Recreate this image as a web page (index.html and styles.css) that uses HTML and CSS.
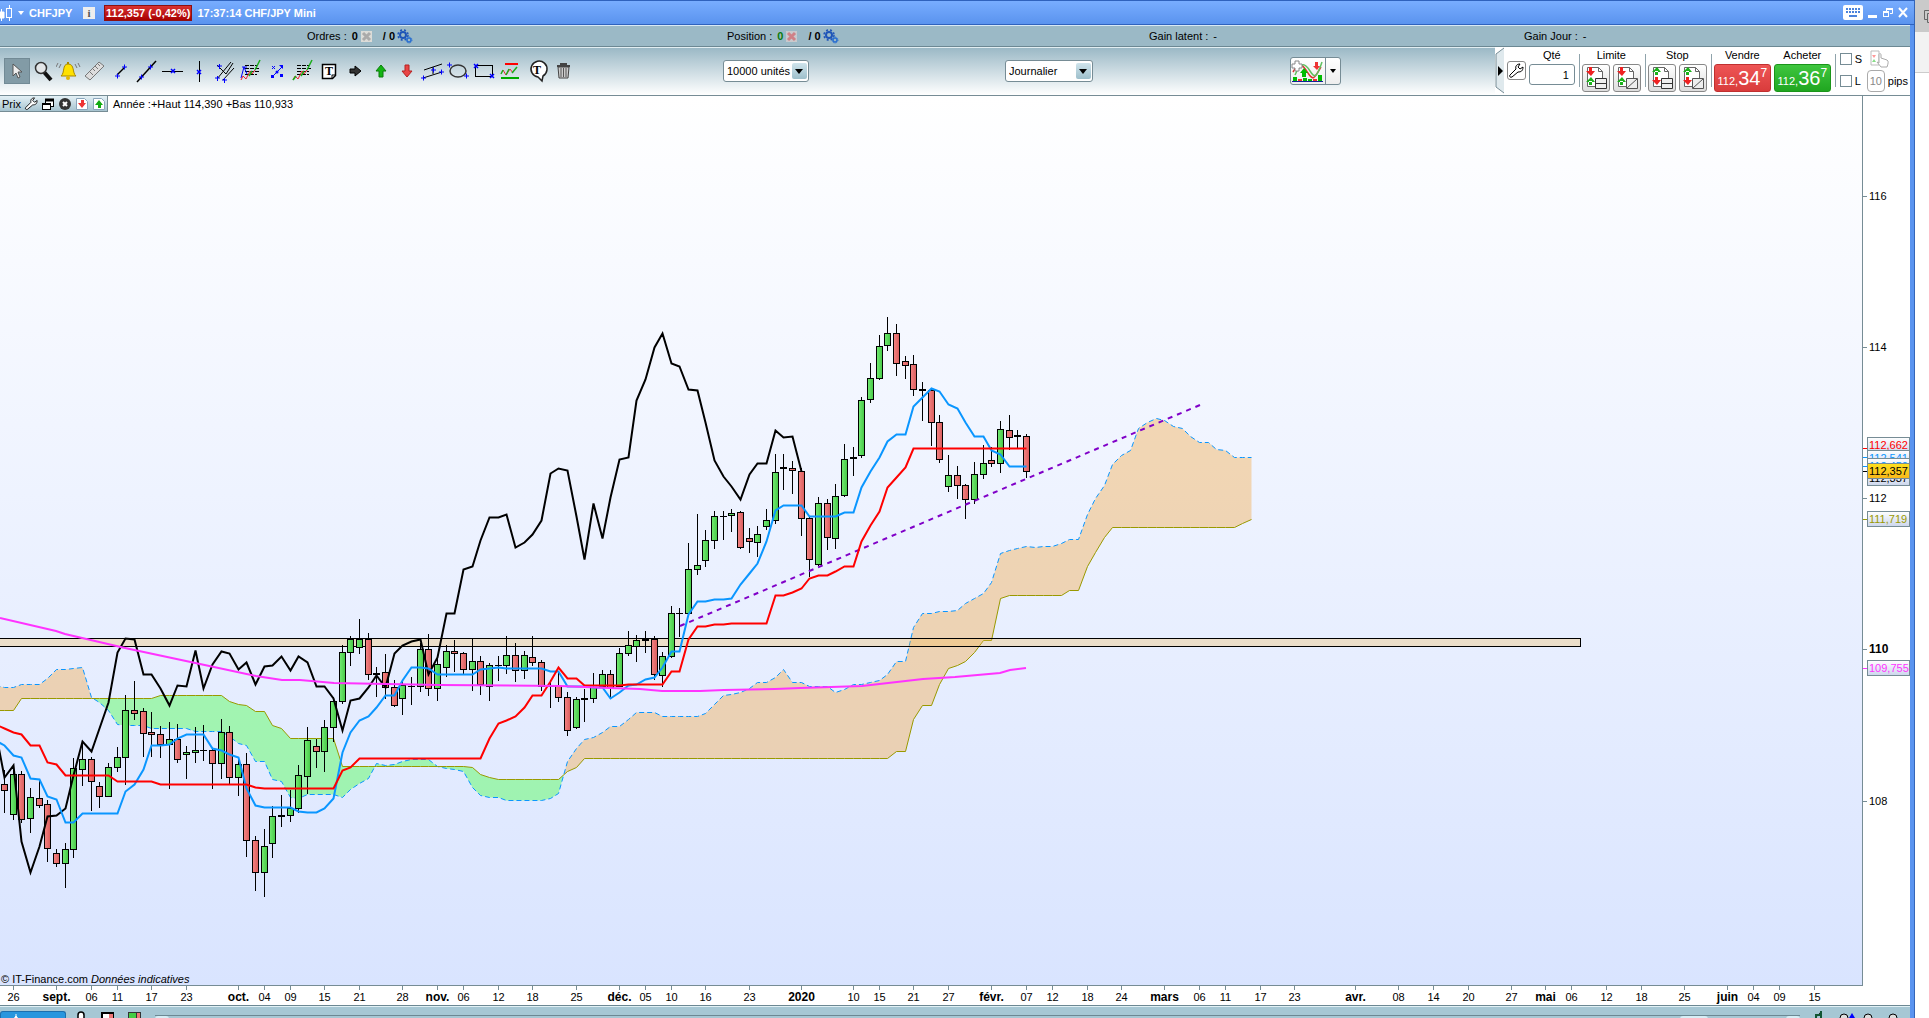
FILE: index.html
```html
<!DOCTYPE html>
<html lang="fr">
<head>
    <meta charset="UTF-8">
    <meta name="viewport" content="width=device-width, initial-scale=1.0">
    <title>CHFJPY - CHF/JPY Mini</title>
    <link rel="stylesheet" href="styles.css">
</head>
<body>
    <div class="window">
        <header class="titlebar">
            <svg class="title-candles" width="13" height="18" viewBox="0 0 13 18"><path d="M1.500 5v12M0 8h4v6H0zM9.500 1v16" stroke="#fff" fill="#fff"/><rect x="6.500" y="4.500" width="5" height="9" fill="#6aa0f8" stroke="#fff"/></svg>
            <span class="caret-white"></span>
            <strong class="symbol">CHFJPY</strong>
            <button class="info" aria-label="Informations">i</button>
            <strong class="change">112,357 (-0,42%)</strong>
            <strong>17:37:14 CHF/JPY Mini</strong>
            <div class="window-buttons">
                <button aria-label="Clavier"><svg width="20" height="15" viewBox="0 0 20 15"><rect width="20" height="15" rx="2" fill="#fff"/><path d="M3 4h14M3 7h14" stroke="#4c83dc" stroke-width="2" stroke-dasharray="2 1"/><path d="M6 11h8" stroke="#4c83dc" stroke-width="2"/></svg></button>
                <button aria-label="Réduire"><svg width="10" height="11" viewBox="0 0 10 11"><path d="M0 9.500h9" stroke="#fff" stroke-width="3"/></svg></button>
                <button aria-label="Restaurer"><svg width="10" height="11" viewBox="0 0 10 11" fill="none" stroke="#fff"><path d="M3.500 4V1.500h6v5H7"/><path d="M3 2h7" stroke-width="2"/><rect x=".5" y="5.500" width="5" height="4"/><path d="M0 5h6" stroke-width="2"/></svg></button>
                <button aria-label="Fermer"><svg width="10" height="11" viewBox="0 0 10 11"><path d="M1 1l8 9M9 1L1 10" stroke="#fff" stroke-width="2"/></svg></button>
            </div>
        </header>

        <div class="account">
            <div class="account-item">
                <span>Ordres :</span> <b>0</b>
                <svg width="13" height="13" viewBox="0 0 13 13"><rect x="1" y="1" width="11" height="11" fill="#dcdcd8"/><path d="M3 3l7 7M10 3l-7 7" stroke="#aaa" stroke-width="3"/></svg>
                <b class="slash">/ 0</b>
                <svg class="gears" width="16" height="15" viewBox="0 0 16 15" fill="none" stroke="#1e55b8"><circle cx="6" cy="6" r="3" stroke-width="2"/><circle cx="6" cy="6" r="5" stroke-width="1.500" stroke-dasharray="2 2"/><circle cx="12" cy="11" r="2" stroke="#2a6fd0" stroke-width="1.500"/><circle cx="12" cy="11" r="3" stroke="#2a6fd0" stroke-dasharray="1 1"/></svg>
            </div>
            <div class="account-item">
                <span>Position :</span> <b class="green">0</b>
                <svg width="13" height="13" viewBox="0 0 13 13"><rect x="1" y="1" width="11" height="11" fill="#c9c9cc"/><path d="M3 3l7 7M10 3l-7 7" stroke="#cf8187" stroke-width="3"/></svg>
                <b class="slash">/ 0</b>
                <svg class="gears" width="16" height="15" viewBox="0 0 16 15" fill="none" stroke="#1e55b8"><circle cx="6" cy="6" r="3" stroke-width="2"/><circle cx="6" cy="6" r="5" stroke-width="1.500" stroke-dasharray="2 2"/><circle cx="12" cy="11" r="2" stroke="#2a6fd0" stroke-width="1.500"/><circle cx="12" cy="11" r="3" stroke="#2a6fd0" stroke-dasharray="1 1"/></svg>
            </div>
            <div class="account-item"><span>Gain latent :</span> <span>-</span></div>
            <div class="account-item"><span>Gain Jour :</span> <span>-</span></div>
        </div>

        <div class="toolbar">
            <div class="tools">
                <button class="tool active" aria-label="Sélection"><svg viewBox="0 0 26 26"><path d="M9 6v12l3-3 2 5 2-1-2-5h4z" fill="#eee" stroke="#555"/></svg></button>
                <button class="tool" aria-label="Zoom"><svg viewBox="0 0 26 26"><path d="M14 14l7 8" stroke="#111" stroke-width="4"/><circle cx="11" cy="10" r="5.500" fill="#e3e6e8" stroke="#333" stroke-width="1.500"/></svg></button>
                <button class="tool" aria-label="Alerte"><svg viewBox="0 0 26 26"><path d="M12 6c-6 0-3 9-7 12h15c-4-3-1-12-8-12z" fill="#ffe100" stroke="#a98800"/><circle cx="12" cy="20" r="2" fill="#e4b900"/><path d="M12 4v2" stroke="#a98800" stroke-width="2"/><path d="M5 6l-2 4M2 5L0 9M19 6l2 4M22 5l2 4" stroke="#777"/></svg></button>
                <button class="tool" aria-label="Règle"><svg viewBox="0 0 26 26"><path d="M3 18L17 4l5 4L8 22z" fill="#ddd" stroke="#777"/><path d="M8 14l3 3M11 11l2 2M13 8l3 3M16 6l2 2" stroke="#777"/></svg></button>
                <button class="tool" aria-label="Segment"><svg viewBox="0 0 26 26"><path d="M9 17l8-8" stroke="#000" stroke-width="1.500"/><path d="M7 18h5M9.500 15.500v5M14 9h5M16.500 6.500v5" stroke="#00f"/></svg></button>
                <button class="tool" aria-label="Droite"><svg viewBox="0 0 26 26"><path d="M3 24L22 3" stroke="#000" stroke-width="1.500"/><path d="M5 19h5M7.500 16.500v5M14 9h5M16.500 6.500v5" stroke="#00f"/></svg></button>
                <button class="tool" aria-label="Horizontale"><svg viewBox="0 0 26 26"><path d="M2 13.500h21" stroke="#000"/><path d="M11 11l4 4M15 11l-4 4" stroke="#00f" stroke-width="1.500"/></svg></button>
                <button class="tool" aria-label="Verticale"><svg viewBox="0 0 26 26"><path d="M13.500 3v21" stroke="#000"/><path d="M11 12l4 4M15 12l-4 4" stroke="#00f" stroke-width="1.500"/></svg></button>
                <button class="tool" aria-label="Fourchette"><svg viewBox="0 0 26 26"><path d="M5 21L19 4M11 22L22 10M5 7l9 9M14 16l7-11" stroke="#000"/><path d="M3 20h5M5.500 18v5M10 22h5M12.500 20v5M5 8h5M7.500 6v5" stroke="#00f"/></svg></button>
                <button class="tool" aria-label="Régression"><svg viewBox="0 0 26 26"><path d="M7 7.500h12M7 10.500h14M7 13.500h14M7 16.500h12" stroke="#000" stroke-dasharray="4 1"/><path d="M3 20l3-11 3 7M4 9h5" fill="none" stroke="#00f"/><path d="M3 22l2-4 3 3 4-8 2 3 3-4" fill="none" stroke="#e23"/><path d="M17 12l5-10M11 18l3-5" stroke="#1bad1b" stroke-width="1.500"/></svg></button>
                <button class="tool" aria-label="Points"><svg viewBox="0 0 26 26"><path d="M9 18l9-9" stroke="#00f"/><path d="M8 8l3 3M11 8l-3 3" stroke="#00f"/><rect x="7" y="17" width="3" height="3" fill="#00f"/><path d="M15 7h4v4z" fill="#00f"/><rect x="16" y="16" width="3" height="3" fill="#00f"/><circle cx="13" cy="14" r="1.500" fill="#00f"/></svg></button>
                <button class="tool" aria-label="Ratios"><svg viewBox="0 0 26 26"><path d="M7 7.500h12M7 10.500h14M7 13.500h12M7 16.500h12" stroke="#000" stroke-dasharray="4 1"/><path d="M3 22l2-4 3 3 4-8 2 3 3-4" fill="none" stroke="#e23"/><path d="M17 12l5-10M3 22l3-4M11 18l3-5" stroke="#1bad1b" stroke-width="1.500"/></svg></button>
                <button class="tool" aria-label="Texte"><svg viewBox="0 0 26 26"><path d="M6.500 6.500h13v11l-3 3h-10z" fill="#fff" stroke="#000" stroke-width="1.500"/><path d="M16 20v-3h3" fill="none" stroke="#000"/><text x="13" y="17" class="glyph">T</text></svg></button>
                <button class="tool" aria-label="Flèche droite"><svg viewBox="0 0 26 26"><path d="M8 11h5V8l6 5-6 5v-3H8z" fill="#333" stroke="#000"/></svg></button>
                <button class="tool" aria-label="Flèche haut"><svg viewBox="0 0 26 26"><path d="M11 19v-6H8l5-6 5 6h-3v6z" fill="#13b513" stroke="#0a7d0a"/></svg></button>
                <button class="tool" aria-label="Flèche bas"><svg viewBox="0 0 26 26"><path d="M11 7v6H8l5 6 5-6h-3V7z" fill="#e84545" stroke="#b52222"/></svg></button>
                <button class="tool" aria-label="Canal"><svg viewBox="0 0 26 26"><path d="M4 12l18-6M3 20l19-6M13 9v7" stroke="#000"/><path d="M1 20h5M3.500 17.500v5M19 14h5M21.500 11.500v5M11 12h5M13.500 9.500v5" stroke="#00f"/></svg></button>
                <button class="tool" aria-label="Ellipse"><svg viewBox="0 0 26 26"><ellipse cx="12" cy="13" rx="8" ry="6" fill="none" stroke="#333" stroke-width="1.500"/><path d="M1 7h5M3.500 4.500v5M18 18h5M20.500 15.500v5" stroke="#00f"/></svg></button>
                <button class="tool" aria-label="Rectangle"><svg viewBox="0 0 26 26"><rect x="3.500" y="7.500" width="17" height="11" fill="none" stroke="#000"/><path d="M2 6l4 4M6 6l-4 4M18 16l4 4M22 16l-4 4" stroke="#00f" stroke-width="1.500"/></svg></button>
                <button class="tool" aria-label="Bornes"><svg viewBox="0 0 26 26"><path d="M7 6h13" stroke="#f00" stroke-width="2"/><path d="M3 20h18" stroke="#0a0" stroke-width="2"/><path d="M5 12l3 5 4-6 3 4" fill="none" stroke="#e23"/><path d="M3 16l2-4M8 17l3-6M14 15l5-6" fill="none" stroke="#1bad1b" stroke-width="1.500"/></svg></button>
                <button class="tool" aria-label="Commentaire"><svg viewBox="0 0 26 26"><path d="M18 23l-4-4a8 8 0 1 1 5-1z" fill="#fff" stroke="#222" stroke-width="1.500"/><text x="13" y="16" class="glyph">T</text></svg></button>
                <button class="tool" aria-label="Supprimer"><svg viewBox="0 0 26 26"><path d="M8 9h11l-1 11H9z" fill="#ccc" stroke="#444"/><path d="M11 10v9M13.500 10v9M16 10v9" stroke="#555"/><path d="M7 8h13M10 6h7" stroke="#444" stroke-width="2"/></svg></button>
            </div>

            <div class="dropdown units">
                <select aria-label="Unités"><option>10000 unités</option></select>
            </div>
            <div class="dropdown period">
                <select aria-label="Période"><option>Journalier</option></select>
            </div>

            <div class="indicators">
                <button class="indicator-main" aria-label="Indicateurs"><svg width="33" height="24" viewBox="0 0 33 24"><path d="M2 13C9 1 12 6 17 14s6 6 13-6" fill="none" stroke="#d33" stroke-width="1.500"/><path d="M4 16C10 2 14 4 19 12s7 6 12-9" fill="none" stroke="#5fc05f" stroke-width="1.500"/><path d="M4 2h4v3h3v4H8v3H4V9H1V5h3z" fill="#fff" stroke="#888"/><path d="M24 3h3v4h2l-3 4-4-4h2z" fill="#e33"/><path d="M11 18v-4H9l4-5 4 5h-2v4z" fill="#0b0"/><path d="M2 22v-4h4v4M12 22v-3h4v3M17 22v-2h4v2M27 22v-6h4v6" fill="#0b0"/><path d="M7 22v-2h4v2M22 22v-2h4v2" fill="#e33"/><path d="M1 22.500h31" stroke="#129"/></svg></button>
                <button class="indicator-more" aria-label="Plus d'indicateurs"></button>
            </div>

            <form class="order-panel">
                <button type="button" class="collapse" aria-label="Replier"><svg width="10" height="47" viewBox="0 0 10 47"><path d="M9 1L1 7v33l8 6" fill="#dfe9ed" stroke="#768c95"/><path d="M3 19l5 5-5 5z"/></svg></button>
                <button type="button" class="small-button wrench" aria-label="Réglages"><svg width="16" height="16" viewBox="0 0 16 16"><path d="M2 12l6-6c-1-3 1-5 4-5l-2 3 2 2 3-2c0 4-2 5-5 5l-6 5c-2 1-3-1-2-2z" fill="#fff" stroke="#000"/></svg></button>
                <div class="field">
                    <label for="qty">Qté</label>
                    <input id="qty" class="qty" type="text" value="1">
                </div>
                <div class="field divided">
                    <span>Limite</span>
                    <div class="pair">
                        <button type="button" class="order-button" aria-label="Limite simple"><svg viewBox="0 0 28 28"><use href="#doc"/><path d="M4 7h9l-4 5zM7 3h3v5H7z" fill="#e22"/><path d="M4 18h9l-4-5zM7 17h3v4H7z" fill="#1ab21a"/><path d="M13.500 14.500h11v10h-11zM13 19.500h12" fill="#eee" stroke="#333"/></svg></button>
                        <button type="button" class="order-button" aria-label="Limite attachée"><svg viewBox="0 0 28 28"><use href="#doc"/><path d="M4 7h9l-4 5zM7 3h3v5H7z" fill="#e22"/><path d="M4 18h9l-4-5zM7 17h3v4H7z" fill="#1ab21a"/><path d="M13.500 14.500h11v10h-11zM14 24l10-9" fill="#eee" stroke="#555"/></svg></button>
                    </div>
                </div>
                <div class="field divided">
                    <span>Stop</span>
                    <div class="pair">
                        <button type="button" class="order-button" aria-label="Stop simple"><svg viewBox="0 0 28 28"><use href="#doc"/><path d="M4 8h9L9 3zM7 7h3v4H7z" fill="#1ab21a"/><path d="M4 16h9l-4 5zM7 13h3v4H7z" fill="#e22"/><path d="M13.500 14.500h11v10h-11zM13 19.500h12" fill="#eee" stroke="#333"/></svg></button>
                        <button type="button" class="order-button" aria-label="Stop attaché"><svg viewBox="0 0 28 28"><use href="#doc"/><path d="M4 8h9L9 3zM7 7h3v4H7z" fill="#1ab21a"/><path d="M4 16h9l-4 5zM7 13h3v4H7z" fill="#e22"/><path d="M13.500 14.500h11v10h-11zM14 24l10-9" fill="#eee" stroke="#555"/></svg></button>
                    </div>
                </div>
                <div class="field divided">
                    <label for="sell">Vendre</label>
                    <button type="button" id="sell" class="price sell">112,<span class="big">34</span><sup>7</sup></button>
                </div>
                <div class="field buy-field">
                    <label for="buy">Acheter</label>
                    <button type="button" id="buy" class="price buy">112,<span class="big">36</span><sup>7</sup></button>
                </div>
                <div class="options divided">
                    <label class="check"><input type="checkbox"> S</label>
                    <svg class="hand" width="20" height="18" viewBox="0 0 20 18"><path d="M1 1h8v14H1z" fill="#fff" stroke="#bbb"/><path d="M2 5l2 3 2-3z" fill="#f99"/><path d="M2 12l2-3 2 3z" fill="#8d8"/><path d="M9 13V5c0-2 2-2 2 0v3l6 2c2 1 1 4 0 7h-6l-4-5z" fill="#fff" stroke="#aaa"/></svg>
                    <label class="check"><input type="checkbox"> L</label>
                    <label class="pips"><input type="text" value="10"> pips</label>
                </div>
            </form>
        </div>

        <main class="chart">
            <div class="plot">
                <svg id="plot"></svg>
                <div class="legend">
                    <div class="legend-box">
                        <span>Prix</span>
                        <button aria-label="Réglages"><svg width="14" height="14" viewBox="0 0 16 16"><path d="M2 12l6-6c-1-3 1-5 4-5l-2 3 2 2 3-2c0 4-2 5-5 5l-6 5c-2 1-3-1-2-2z" fill="#fff" stroke="#000"/></svg></button>
                        <button aria-label="Fenêtres"><svg width="14" height="14" viewBox="0 0 14 14" fill="#fff" stroke="#000"><rect x="4.500" y="2.500" width="8" height="7"/><path d="M4 3h9" stroke-width="3"/><rect x="1.500" y="6.500" width="8" height="6"/><path d="M1 7h9" stroke-width="2"/></svg></button>
                        <button aria-label="Fermer"><svg width="14" height="14" viewBox="0 0 14 14"><circle cx="7" cy="7" r="6" fill="#333"/><path d="M5 5l4 4M9 5L5 9" stroke="#fff" stroke-width="2"/></svg></button>
                        <button aria-label="Descendre"><svg width="14" height="14" viewBox="0 0 14 14"><path d="M1.500 1.500h8l3 3v8h-11z" fill="#fff" stroke="#8aa5bb"/><path d="M6 3h3v3h2l-4 5-4-5h3z" fill="#e33"/></svg></button>
                        <button aria-label="Monter"><svg width="14" height="14" viewBox="0 0 14 14"><path d="M1.500 1.500h8l3 3v8h-11z" fill="#fff" stroke="#8aa5bb"/><path d="M6 11h3V8h2L7 3 3 8h3z" fill="#1a1"/></svg></button>
                    </div>
                    <span>Année :+Haut 114,390 +Bas 110,933</span>
                </div>
                <div class="copyright">© IT-Finance.com <em>Données indicatives</em></div>
            </div>
            <svg id="priceAxis"></svg>
            <svg id="timeAxis"></svg>
        </main>

        <footer class="bottombar">
            <button class="bottom-tab" aria-label="Graphique"><svg width="9" height="8" viewBox="0 0 9 8"><path d="M5 2v6M2 8l3-4 3 4" stroke="#fff" fill="#fff"/></svg></button>
            <svg width="12" height="7" viewBox="0 0 12 7"><path d="M3 7V4a3 3 0 0 1 6 0v3" fill="#fff" stroke="#000" stroke-width="1.500"/></svg>
            <svg width="13" height="6" viewBox="0 0 13 6"><rect x="1" y="1" width="11" height="9" fill="#fff" stroke="#000" stroke-width="2"/><path d="M8 2h4v5H8z" fill="#e77"/></svg>
            <svg width="13" height="6" viewBox="0 0 13 6"><rect width="13" height="9" fill="#333"/><path d="M1 1h7v7H1z" fill="#4c4"/><path d="M9 1h3v7H9z" fill="#e77"/></svg>
            <div class="scroll-track"><span class="scroll-start"></span><span class="scroll-thumb"></span><span class="scroll-end"></span></div>
            <svg width="84" height="8" viewBox="0 0 84 8"><path d="M2 8V5h5V1M7 4v4" stroke="#153" stroke-width="2"/><circle cx="30" cy="8" r="4" fill="#ddd" stroke="#000"/><path d="M35 8l3-5 3 5z" fill="#00f"/><circle cx="54" cy="8" r="4" fill="#ddd" stroke="#000"/><circle cx="79" cy="8" r="4" fill="#ddd" stroke="#000"/></svg>
        </footer>
    </div>

    <aside class="behind">
        <div class="behind-tab"><svg width="10" height="16" viewBox="0 0 10 16" fill="none" stroke="#666"><path d="M10 1.500H1.500v9H4M10 4.500H4.500v9H10"/></svg></div>
        <div class="behind-bar"></div>
    </aside>

    <svg class="defs" width="0" height="0"><defs>
        <g id="doc"><path d="M5.500 3.500h11l4 4v15h-15z" fill="#fff" stroke="#666"/><path d="M16.500 3.500v4h4" fill="none" stroke="#666"/></g>
        <linearGradient id="up"><stop offset="0" stop-color="#74ec74"/><stop offset="1" stop-color="#46c846"/></linearGradient>
        <linearGradient id="down"><stop offset="0" stop-color="#f58585"/><stop offset="1" stop-color="#d95c5c"/></linearGradient>
    </defs></svg>

    <script src="chart.js"></script>
</body>
</html>
```
FILE: styles.css
```css
* {
    box-sizing: border-box;
}

body {
    margin: 0;
    height: 100vh;
    display: flex;
    overflow: hidden;
    font-family: "Liberation Sans", Arial, sans-serif;
    font-size: 11px;
    color: #000;
    background: #fff;
}

button, input, select {
    font: inherit;
    margin: 0;
    padding: 0;
}

button {
    border: none;
    background: none;
}

svg {
    display: block;
    flex-shrink: 0;
}

.defs {
    position: absolute;
}

.window {
    flex: 1;
    min-width: 0;
    display: flex;
    flex-direction: column;
    border-right: 4px solid #5a94f0;
    box-shadow: 1px 0 0 #3465b8;
    z-index: 1;
}

/* Title bar */
.titlebar {
    height: 25px;
    margin-right: -4px;
    padding-right: 6px;
    display: flex;
    align-items: center;
    color: #fff;
    background: linear-gradient(#78adff, #5a93ee);
    border-top: 1px solid #2f62bd;
    border-bottom: 1px solid #2f62bd;
}

.caret-white {
    margin: 0 5px;
    border: 3px solid transparent;
    border-top: 4px solid #fff;
    border-bottom: none;
}

.symbol {
    width: 54px;
}

.info {
    width: 12px;
    height: 12px;
    margin-right: 9px;
    line-height: 12px;
    font-family: "Liberation Serif", serif;
    font-weight: bold;
    color: #555;
    background: #eee;
}

.change {
    height: 16px;
    margin-right: 5px;
    padding: 0 1px;
    line-height: 14px;
    background: linear-gradient(#d93232, #a80000);
    border: 1px solid #8c1010;
}

.window-buttons {
    margin-left: auto;
    display: flex;
    align-items: center;
    gap: 5px;
}

/* Orders / position */
.account {
    height: 22px;
    padding-left: 307px;
    display: grid;
    grid-template-columns: 420fr 422fr 375fr 386fr;
    align-items: center;
    background: #9bb9c6;
    border-top: 1px solid #d9e9f5;
    border-bottom: 1px solid #6c8893;
}

.account-item {
    display: flex;
    align-items: center;
    gap: 5px;
}

.account-item svg {
    margin-left: -3px;
}

.slash {
    margin-left: 5px;
}

.green {
    color: #0a7a0a;
}

/* Toolbar */
.toolbar {
    height: 49px;
    padding: 0 0 2px 4px;
    display: flex;
    align-items: center;
    background: linear-gradient(#9bb9c6, #fff);
    border-top: 1px solid #e2eef2;
    border-bottom: 1px solid #768c95;
}

.tools {
    display: flex;
}

.tool {
    width: 26px;
    height: 26px;
}

.tool svg {
    width: 26px;
    height: 26px;
}

.tool.active {
    background: #829ba6;
    border: 1px solid #728a95;
}

.tool.active svg {
    margin: -1px;
}

.glyph {
    font-family: "Liberation Serif", serif;
    font-size: 12px;
    font-weight: bold;
    text-anchor: middle;
}

.dropdown {
    position: relative;
    height: 22px;
}

.dropdown select {
    width: 100%;
    height: 22px;
    padding-left: 3px;
    appearance: none;
    color: #000;
    background: #fff;
    border: 1px solid #768c95;
    border-radius: 3px;
}

.dropdown::before {
    content: "";
    position: absolute;
    top: 3px;
    right: 2px;
    width: 15px;
    height: 16px;
    background: linear-gradient(#cfe4ec, #9dbfcb);
    border-radius: 2px;
    pointer-events: none;
}

.dropdown::after {
    content: "";
    position: absolute;
    top: 9px;
    right: 6px;
    border: 4px solid transparent;
    border-top: 5px solid #000;
    border-bottom: none;
    pointer-events: none;
}

.units {
    width: 86px;
    margin-left: 147px;
}

.period {
    width: 88px;
    margin-left: 196px;
}

.indicators {
    height: 28px;
    margin-left: 197px;
    display: flex;
    background: linear-gradient(#fff, #eee);
    border: 1px solid #768c95;
    border-radius: 3px;
}

.indicator-main {
    width: 35px;
    border-right: 1px solid #768c95;
}

.indicator-more {
    width: 14px;
    display: flex;
    align-items: center;
    justify-content: center;
}

.indicator-more::after {
    content: "";
    border: 3px solid transparent;
    border-top: 4px solid #000;
    border-bottom: none;
}

/* Order panel */
.order-panel {
    height: 47px;
    margin-left: auto;
    padding-right: 2px;
    display: flex;
    align-items: center;
    background: #fff;
}

.small-button {
    width: 19px;
    height: 19px;
    margin: 0 3px 0 2px;
    border: 1px solid #888;
    border-radius: 3px;
}

.field {
    height: 43px;
    display: flex;
    flex-direction: column;
    align-items: center;
}

.field > span, .field > label {
    height: 15px;
    line-height: 13px;
}

.divided {
    padding-left: 3px;
    margin-left: 4px;
    position: relative;
}

.divided::before {
    content: "";
    position: absolute;
    left: 0;
    top: 5px;
    bottom: 5px;
    border-left: 1px solid #8fa3ab;
}

.qty {
    width: 46px;
    height: 21px;
    padding-right: 5px;
    text-align: right;
    border: 1px solid #768c95;
    border-radius: 3px;
}

.pair {
    display: flex;
    gap: 3px;
}

.order-button {
    width: 28px;
    height: 28px;
    background: linear-gradient(#fff, #ddd);
    border: 1px solid #888;
    border-radius: 3px;
}

.order-button svg {
    width: 28px;
    height: 28px;
    margin: -1px;
}

.price {
    width: 57px;
    height: 28px;
    color: #fff;
    line-height: 26px;
    white-space: nowrap;
    border-radius: 3px;
}

.price .big {
    font-size: 20px;
}

.price sup {
    font-size: 12px;
    line-height: 0;
    vertical-align: 8px;
}

.sell {
    background: linear-gradient(#ee5555, #d93c3c);
    border: 1px solid #c03030;
}

.buy {
    background: linear-gradient(#3fc63f, #20a620);
    border: 1px solid #1a951a;
}

.buy-field {
    margin-left: 3px;
}

.options {
    height: 43px;
    padding-left: 5px;
    display: grid;
    grid-template-columns: 27px auto;
    grid-template-rows: 20px 24px;
    align-items: center;
}

.check, .pips {
    display: flex;
    align-items: center;
    gap: 3px;
}

.check input {
    width: 12px;
    height: 12px;
    appearance: none;
    background: #fff;
    border: 1px solid #768c95;
}

.pips input {
    width: 18px;
    height: 22px;
    text-align: center;
    color: #888;
    border: 1px solid #aaa;
    border-radius: 4px;
}

.hand {
    margin-left: 3px;
}

/* Chart */
.chart {
    flex: 1;
    min-height: 0;
    display: grid;
    grid-template-columns: 1fr 47px;
    grid-template-rows: 1fr 19px;
}

.plot {
    position: relative;
    min-width: 0;
    background: linear-gradient(#fff, #d9e4ff);
    border-right: 1px solid #768c95;
    border-bottom: 1px solid #768c95;
}

#plot {
    width: 100%;
    height: 100%;
}

#priceAxis {
    width: 47px;
    height: 100%;
}

#timeAxis {
    width: 100%;
    height: 19px;
}

.legend {
    position: absolute;
    top: 0;
    left: 0;
    display: flex;
    align-items: center;
    gap: 5px;
}

.legend-box {
    width: 108px;
    height: 16px;
    padding-left: 2px;
    display: flex;
    align-items: center;
    gap: 3px;
    background: linear-gradient(#e4f1f6, #a6c3cf);
    border-right: 1px solid #768c95;
    border-bottom: 1px solid #768c95;
}

.copyright {
    position: absolute;
    left: 1px;
    bottom: 0;
    line-height: 11px;
}

.day {
    font-size: 11px;
    text-anchor: middle;
}

.month {
    font-size: 12px;
    font-weight: bold;
    text-anchor: middle;
}

.level {
    font-size: 11px;
}

.level.strong {
    font-size: 12px;
    font-weight: bold;
}

/* Bottom bar */
.bottombar {
    height: 13px;
    padding-right: 12px;
    display: flex;
    align-items: flex-end;
    gap: 14px;
    overflow: hidden;
    background: #a6c7d4;
    border-top: 1px solid #6c8893;
    box-shadow: inset 0 1px 0 #e2f2f6;
}

.bottom-tab {
    width: 66px;
    height: 7px;
    margin-right: -5px;
    padding-left: 10px;
    background: #2896de;
    border: 1px solid #1c6fae;
    border-bottom: none;
    border-radius: 3px 3px 0 0;
}

.scroll-track {
    flex: 1;
    height: 3px;
    display: flex;
    gap: 78px;
    border-top: 1px solid #6c8893;
}

.scroll-start, .scroll-thumb, .scroll-end {
    width: 14px;
    height: 3px;
    background: #d7eef6;
    border-radius: 3px 3px 0 0;
}

.scroll-start {
    margin-right: auto;
}

.scroll-thumb {
    width: 28px;
}

/* Window behind */
.behind {
    width: 15px;
    padding-left: 1px;
    background: #fff;
}

.behind-tab {
    height: 32px;
    padding: 9px 0 0 8px;
    background: #cacaca;
    overflow: hidden;
}

.behind-bar {
    height: 41px;
    background: #f2f2f2;
    border-bottom: 1px solid #ccc;
}
```
FILE: chart.js
```js
const TOP = 96;
const STEP = 8.66;

// [color, high, body top, body bottom, low]  g = up, r = down, d = doji
const candles = [
    ['r',770,784,790,813],['g',768,774,814,820],['r',771,774,819,823],['g',788,797,818,833],['r',779,798,805,808],
    ['r',800,804,848,862],['r',849,853,863,867],['g',843,849,863,888],['g',758,768,849,858],['g',741,759,769,786],
    ['r',757,759,781,811],['r',782,786,796,808],['g',763,767,796,797],['g',747,757,767,772],['g',695,710,757,785],
    ['r',681,710,713,720],['r',708,711,733,757],['r',712,732,734,757],['r',726,734,744,758],['g',722,739,744,789],
    ['r',724,739,759,763],['g',746,752,754,779],['g',727,750,752,763],['d',725,750,750,761],['r',749,750,763,789],
    ['g',719,732,763,779],['r',726,732,777,785],['g',757,764,777,796],['r',753,764,840,857],['r',836,840,872,891],
    ['g',829,846,872,897],['g',806,816,843,858],['d',795,815,816,827],['g',790,808,815,822],['g',765,775,808,813],
    ['g',727,740,776,794],['r',739,746,751,768],['g',720,727,751,772],['g',697,701,727,742],['g',645,652,701,704],
    ['g',636,639,652,666],['g',619,639,647,654],['r',633,639,674,680],['d',667,673,674,697],['r',654,672,687,699],
    ['r',680,687,705,707],['g',680,685,698,715],['d',677,686,686,705],['g',643,649,686,692],['r',634,649,688,696],
    ['g',658,664,688,701],['g',645,651,667,677],['r',640,651,653,672],['r',652,653,669,674],['g',639,661,669,691],
    ['r',656,661,684,695],['g',663,665,686,701],['d',656,665,665,681],['g',636,655,665,674],['r',643,655,670,682],
    ['g',651,655,670,679],['r',636,657,662,666],['r',660,662,686,691],['d',680,686,686,708],['r',672,686,697,702],
    ['r',692,697,730,736],['g',697,699,727,729],['d',689,698,699,722],['g',673,687,698,703],['g',670,674,686,688],
    ['r',670,674,687,698],['g',648,653,686,687],['g',631,645,653,656],['g',635,640,646,662],['d',631,639,640,653],
    ['r',636,639,674,680],['g',652,656,675,687],['g',606,613,656,658],['d',608,613,613,637],['g',543,569,613,614],
    ['g',514,565,569,575],['g',530,540,560,567],['g',511,516,540,549],['d',511,516,516,540],['g',509,513,515,532],
    ['r',511,512,547,549],['r',528,538,541,553],['g',526,534,542,557],['g',509,520,526,530],['g',454,472,520,524],
    ['d',454,467,468,490],['r',461,468,470,494],['r',468,471,518,536],['r',517,518,559,577],['g',497,503,564,566],
    ['r',499,503,537,550],['g',484,496,538,549],['g',444,459,495,497],['d',447,457,458,476],['g',397,400,455,458],
    ['g',363,378,399,403],['g',335,346,378,380],['g',317,333,345,351],['r',324,333,363,376],['r',356,361,365,379],
    ['r',355,364,389,396],['d',382,389,390,421],['r',388,390,422,446],['r',415,422,459,463],['g',455,475,486,492],
    ['r',466,475,485,499],['r',484,485,499,519],['g',462,474,499,504],['g',445,463,474,479],['r',447,460,463,467],
    ['g',421,429,463,473],['r',415,430,437,450],['d',430,435,436,448],['r',434,436,471,478]
];

// Every series starts one bar before the first visible candle
const chikou = [
    730,777,765,841,872,846,816,815,808,775,741,751,728,702,652,638,639,674,674,688,705,685,686,650,688,664,
    651,653,669,662,684,666,665,656,670,656,662,686,686,698,730,700,698,687,675,687,653,645,641,639,674,657,
    613,613,569,566,540,517,517,514,547,542,534,520,473,468,470,516,559,503,538,497,459,457,400,379,347,333,
    363,366,389,390,422,460,476,486,499,474,463,463,430,437,436,471
];

const tenkan = [
    740,745,755,757,778,779,796,799,822,822,813,813,813,813,813,791,784,769,745,745,744,738,734,734,734,748,
    750,754,757,788,805,807,807,807,807,811,812,812,808,798,752,732,720,716,707,695,695,680,667,667,668,674,
    674,674,674,674,669,668,667,668,668,668,668,668,671,671,686,686,686,687,687,698,692,685,684,679,677,667,
    651,651,614,601,601,599,599,598,584,573,563,541,510,505,505,505,516,516,516,516,512,512,487,471,457,441,
    434,434,406,397,388,391,404,408,422,436,436,450,454,466,466,466
];

const kijun = [
    724,728,732,734,745,745,762,764,775,775,775,775,775,775,781,781,781,781,781,784,784,784,784,784,784,784,
    784,784,784,784,787,788,788,788,788,788,788,788,788,788,770,767,758,758,758,758,758,758,758,758,758,758,
    758,758,758,758,758,738,723,720,716,707,695,695,681,667,678,678,685,685,685,685,685,684,684,684,684,684,
    671,671,639,626,626,624,624,623,623,623,623,623,595,595,592,588,578,575,575,571,566,566,541,525,511,487,
    477,467,448,448,448,448,448,448,448,448,448,448,448,448,448,448
];

const senkouA = [
    685,687,687,684,684,684,678,669,669,668,667,697,702,710,724,725,725,725,728,728,728,728,728,731,731,731,
    731,736,743,745,761,761,779,781,797,798,794,794,794,794,797,789,783,778,763,765,764,761,759,759,759,766,
    768,769,771,787,795,797,797,800,800,800,800,800,798,793,761,748,739,737,732,726,726,719,712,712,712,716,
    716,716,716,716,713,704,695,694,692,688,682,682,677,669,682,682,686,686,686,692,689,684,684,682,680,674,
    661,661,627,613,613,611,611,610,603,598,593,582,553,550,548,546,547,546,546,543,539,539,514,498,485,464,
    455,450,428,422,418,420,426,428,436,442,442,449,450,457,457,457
];

const senkouB = [
    710,710,710,698,698,698,698,698,698,698,698,698,698,698,698,698,698,698,698,695,695,695,695,695,695,695,
    695,701,704,705,711,711,725,728,738,738,738,738,738,738,766,766,766,766,766,766,766,766,766,766,766,766,
    766,766,766,767,774,777,779,779,779,779,779,779,779,779,771,767,758,758,758,758,758,758,758,758,758,758,
    758,758,758,758,758,758,758,758,758,758,758,758,758,758,758,758,758,758,758,758,758,758,758,758,758,758,
    751,751,719,705,705,684,668,665,661,652,640,640,598,595,595,595,595,595,595,595,590,590,566,552,537,527,
    527,527,527,527,527,527,527,527,527,527,527,527,527,527,523,519
];

const average = [
    [0,618],[56,631],[65,634],[125,648],[200,664],[256,676],[282,680],[300,680],[334,683],[440,685],[560,686],
    [610,688],[640,689],[662,691],[700,691],[724,690],[775,689],[800,688],[862,686],[923,679],[955,677],[1000,673],
    [1010,670],[1026,668]
];

// [bar index, label]
const dates = [
    [1,'26'],[6,'sept.'],[10,'06'],[13,'11'],[17,'17'],[21,'23'],[27,'oct.'],[30,'04'],[33,'09'],[37,'15'],
    [41,'21'],[46,'28'],[50,'nov.'],[53,'06'],[57,'12'],[61,'18'],[66,'25'],[71,'déc.'],[74,'05'],[77,'10'],
    [81,'16'],[86,'23'],[92,'2020'],[98,'10'],[101,'15'],[105,'21'],[109,'27'],[114,'févr.'],[118,'07'],
    [121,'12'],[125,'18'],[129,'24'],[134,'mars'],[138,'06'],[141,'11'],[145,'17'],[149,'23'],[156,'avr.'],
    [161,'08'],[165,'14'],[169,'20'],[174,'27'],[178,'mai'],[181,'06'],[185,'12'],[189,'18'],[194,'25'],
    [199,'juin'],[202,'04'],[205,'09'],[209,'15']
];

const levels = [[196,'116'],[347,'114'],[498,'112'],[649,'110'],[801,'108']];

// [tick, box top, label, color]
const tags = [
    [448,437,'112,662','#f00'],
    [457,450,'112,541','#0a96ff'],
    [466,458,'112,450','#0a96ff'],
    [471,470,'112,337','#000'],
    [471,463,'112,357','#000','url(#gold)'],
    [519,511,'111,719','#999900'],
    [668,660,'109,755','#ff33ff']
];

function barX(i) {
    return 4.5 + Math.round(i * STEP);
}

function seriesPoints(values) {
    return values.map((y, k) => [barX(k - 1), y + 0.5]);
}

function join(points) {
    return points.map(p => p.join(',')).join(' ');
}

function line(points, color, width, extra = '') {
    return `<polyline points="${join(points)}" fill="none" stroke="${color}" stroke-width="${width}" ${extra}/>`;
}

// Fills the cloud, with a new polygon each time the two lines cross
function cloud(a, b) {
    let out = '';
    let upper = [a[0]];
    let lower = [b[0]];

    function close(bullish) {
        const fill = bullish ? '#f4ac4c' : '#45ff45';
        out += `<polygon points="${join(upper.concat(lower.slice().reverse()))}" fill="${fill}" fill-opacity="0.42"/>`;
    }

    for (let i = 1; i < a.length; i++) {
        const before = b[i - 1][1] - a[i - 1][1];
        const after = b[i][1] - a[i][1];
        if (before * after < 0) {
            const t = before / (before - after);
            const cross = [
                a[i - 1][0] + t * (a[i][0] - a[i - 1][0]),
                a[i - 1][1] + t * (a[i][1] - a[i - 1][1])
            ];
            upper.push(cross);
            close(before > 0);
            upper = [cross];
            lower = [cross];
        }
        upper.push(a[i]);
        lower.push(b[i]);
    }
    close(b[b.length - 1][1] > a[a.length - 1][1]);
    return out;
}

function drawPlot() {
    const a = seriesPoints(senkouA);
    const b = seriesPoints(senkouB);
    let html = `<g transform="translate(0,${-TOP})">`;

    html += cloud(a, b);
    html += line(a, '#0a96ff', 1, 'stroke-dasharray="5 3"');
    html += line(b, '#999900', 1);
    html += '<rect x="-2" y="638.5" width="1582.5" height="8" fill="#f5b850" fill-opacity="0.3" stroke="#000"/>';

    candles.forEach(([color, high, top, bottom, low], i) => {
        const x = barX(i);
        html += `<path d="M${x} ${high}V${low}" stroke="#000"/>`;
        if (color === 'd') {
            html += `<rect x="${x - 3.5}" y="${top}" width="7" height="${bottom - top + 1}"/>`;
        } else {
            const fill = color === 'g' ? 'url(#up)' : 'url(#down)';
            html += `<rect x="${x - 3}" y="${top + 0.5}" width="6" height="${bottom - top}" fill="${fill}" stroke="#000"/>`;
        }
    });

    html += line([[680, 626], [1200, 405]], '#8000c8', 2, 'stroke-dasharray="5 5"');
    html += line(seriesPoints(chikou), '#000', 2);
    html += line(seriesPoints(tenkan), '#0a96ff', 2);
    html += line(seriesPoints(kijun), '#f00', 2);
    html += line(average, '#ff33ff', 2);
    document.getElementById('plot').innerHTML = html + '</g>';
}

function drawPriceAxis() {
    let html = `<defs>
        <linearGradient id="tag" x2="0" y2="1"><stop offset="0" stop-color="#fff"/><stop offset="1" stop-color="#ccd6ec"/></linearGradient>
        <linearGradient id="gold" x2="0" y2="1"><stop offset="0" stop-color="#ffe01c"/><stop offset="1" stop-color="#f8b71c"/></linearGradient>
    </defs><g transform="translate(0,${-TOP})">`;

    levels.forEach(([y, label]) => {
        const strong = label === '110' ? ' strong' : '';
        html += `<path d="M0 ${y + 0.5}h4" stroke="#768c95"/><text class="level${strong}" x="6" y="${y + 4}">${label}</text>`;
    });
    tags.forEach(([tick, top, label, color, fill = 'url(#tag)']) => {
        html += `<path d="M0 ${tick + 0.5}h4" stroke="${color}"/>`;
        html += `<rect x="4.5" y="${top + 0.5}" width="42" height="15" fill="${fill}" stroke="#768c95"/>`;
        html += `<text class="level" x="6" y="${top + 12}" fill="${color}">${label}</text>`;
    });
    document.getElementById('priceAxis').innerHTML = html + '</g>';
}

function drawTimeAxis() {
    let html = '';
    dates.forEach(([bar, label]) => {
        const x = barX(bar);
        const style = /^\d\d$/.test(label) ? 'day' : 'month';
        html += `<path d="M${x} 0v4" stroke="#768c95"/><text class="${style}" x="${x}" y="15">${label}</text>`;
    });
    document.getElementById('timeAxis').innerHTML = html;
}

drawPlot();
drawPriceAxis();
drawTimeAxis();
```
